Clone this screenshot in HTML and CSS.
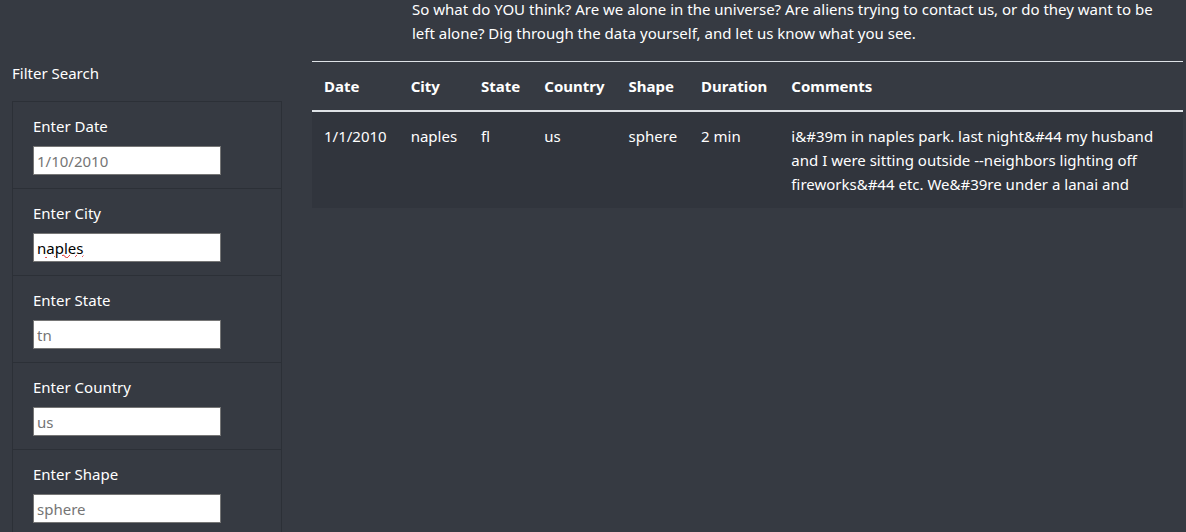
FILE: index.html
```html
<!DOCTYPE html>
<html>
<head>
<meta charset="utf-8">
<link rel="stylesheet" href="styles.css">
</head>
<body>
<div class="page">
  <aside class="sidebar">
    <div class="filter-title">Filter Search</div>
    <ul class="filters">
      <li class="filter">
        <label class="filter-label" for="date">Enter Date</label>
        <input class="filter-input" id="date" type="text" placeholder="1/10/2010">
      </li>
      <li class="filter">
        <label class="filter-label" for="city">Enter City</label>
        <input class="filter-input typed" id="city" type="text" value="naples">
      </li>
      <li class="filter">
        <label class="filter-label" for="state">Enter State</label>
        <input class="filter-input" id="state" type="text" placeholder="tn">
      </li>
      <li class="filter">
        <label class="filter-label" for="country">Enter Country</label>
        <input class="filter-input" id="country" type="text" placeholder="us">
      </li>
      <li class="filter">
        <label class="filter-label" for="shape">Enter Shape</label>
        <input class="filter-input" id="shape" type="text" placeholder="sphere">
      </li>
    </ul>
  </aside>
  <main class="content">
    <p class="intro">So what do YOU think? Are we alone in the universe? Are aliens trying to contact us, or do they want to be left alone? Dig through the data yourself, and let us know what you see.</p>
    <table class="ufo-table">
      <thead>
        <tr>
          <th>Date</th>
          <th>City</th>
          <th>State</th>
          <th>Country</th>
          <th>Shape</th>
          <th>Duration</th>
          <th>Comments</th>
        </tr>
      </thead>
      <tbody>
        <tr>
          <td>1/1/2010</td>
          <td>naples</td>
          <td>fl</td>
          <td>us</td>
          <td>sphere</td>
          <td>2 min</td>
          <td class="comments">i&amp;#39m in naples park. last night&amp;#44 my husband and I were sitting outside --neighbors lighting off fireworks&amp;#44 etc. We&amp;#39re under a lanai and</td>
        </tr>
      </tbody>
    </table>
  </main>
</div>
</body>
</html>
```

FILE: styles.css
```css
html, body {
  margin: 0;
  padding: 0;
  background: #363a42;
  color: #fff;
  font-family: "Noto Sans", "Open Sans", sans-serif;
  font-size: 15px;
  line-height: 24px;
  overflow: hidden;
}

.page {
  display: flex;
  align-items: flex-start;
  padding-left: 12px;
}

.sidebar {
  width: 270px;
  flex: none;
  padding-top: 61px;
}

.filter-title {
  height: 24px;
  margin-bottom: 16px;
}

.filters {
  list-style: none;
  margin: 0;
  padding: 0;
  border: 1px solid #2c3037;
  border-bottom: none;
}

.filter {
  padding: 12px 20px 13px;
  border-bottom: 1px solid #2c3037;
  display: flex;
  flex-direction: column;
  align-items: flex-start;
}

.filter-label {
  display: block;
  margin-bottom: 8px;
}

.filter-input {
  box-sizing: border-box;
  width: 188px;
  height: 29px;
  margin: 0;
  padding: 0 3px;
  border: 1px solid #767676;
  background: #fff;
  color: #000;
  font-family: inherit;
  font-size: 15px;
  line-height: 27px;
  outline: none;
}

.filter-input::placeholder {
  color: #757575;
  opacity: 1;
}

.typed {
  text-decoration: underline wavy #e02020 1px;
  text-underline-offset: 0;
}

.content {
  flex: 1;
  margin-left: 30px;
  margin-right: 3px;
}

.intro {
  margin: -3px 0 16px;
  padding-left: 100px;
  padding-right: 14px;
}

.ufo-table {
  width: 100%;
  border-collapse: collapse;
}

.ufo-table th {
  text-align: left;
  font-weight: 700;
  padding: 12px 12px;
  border-top: 1px solid #dee2e6;
  border-bottom: 2px solid #dee2e6;
  white-space: nowrap;
}

.ufo-table td {
  vertical-align: top;
  padding: 12px 12px;
  white-space: nowrap;
}

.ufo-table tbody tr {
  background: #31353d;
}

.ufo-table td.comments {
  white-space: normal;
  width: 100%;
  padding-right: 12px;
}
```
